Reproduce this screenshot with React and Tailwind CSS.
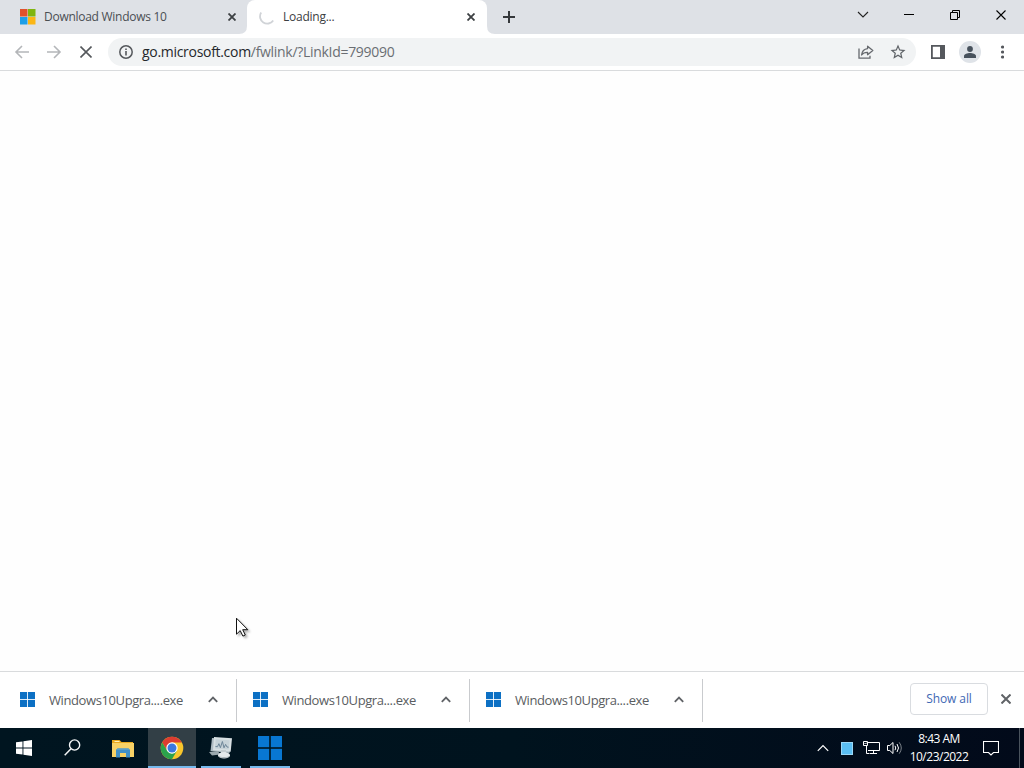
const DOWNLOADS = [
  { id: 1, name: "Windows10Upgra....exe" },
  { id: 2, name: "Windows10Upgra....exe" },
  { id: 3, name: "Windows10Upgra....exe" },
];

function MicrosoftLogo() {
  return (
    <svg width="16" height="16" viewBox="0 0 16 16" className="shrink-0">
      <path fill="#e0512b" d="M0 0h7.5v7.5H0z" />
      <path fill="#7fb50f" d="M8 0h7.5v7.5H8z" />
      <path fill="#1c9fe8" d="M0 8h7.5v7.5H0z" />
      <path fill="#fbb615" d="M8 8h7.5v7.5H8z" />
    </svg>
  );
}

function WindowsTiles({ size, gap, className }) {
  const tile = (24 - gap) / 2;
  const far = tile + gap;
  return (
    <svg width={size} height={size} viewBox="0 0 24 24" className={className}>
      <rect width={tile} height={tile} />
      <rect x={far} width={tile} height={tile} />
      <rect y={far} width={tile} height={tile} />
      <rect x={far} y={far} width={tile} height={tile} />
    </svg>
  );
}

function CloseIcon({ size = 8, stroke = 1.8, className = "" }) {
  return (
    <svg width={size} height={size} viewBox={`0 0 ${size} ${size}`} className={className}>
      <path
        d={`M.5 .5L${size - 0.5} ${size - 0.5}M${size - 0.5} .5L.5 ${size - 0.5}`}
        stroke="currentColor"
        strokeWidth={stroke}
        fill="none"
      />
    </svg>
  );
}

function TabStrip() {
  return (
    <div className="flex h-[34px] shrink-0 bg-[#dee1e6]">
      <div className="flex h-[33px] w-[239px] items-center pl-5">
        <MicrosoftLogo />
        <span className="ml-2 w-[160px] whitespace-nowrap text-[12px] tracking-[-0.27px] text-[#4a4e53]">
          Download Windows 10
        </span>
        <CloseIcon className="ml-6 text-[#3c4043]" />
      </div>

      <div className="flex">
        <svg width="8" height="34" className="shrink-0">
          <path d="M0 34Q8 34 8 26V34Z" fill="#fff" />
        </svg>
        <div className="flex h-[34px] w-[240px] items-center rounded-t-lg bg-white pb-px pl-3">
          <svg width="16" height="16" viewBox="0 0 16 16" className="shrink-0">
            <path
              d="M2.2 3.6A7 7 0 0 0 14.2 11.4"
              fill="none"
              stroke="#d0d3d7"
              strokeWidth="1.8"
            />
          </svg>
          <span className="ml-2 w-[160px] whitespace-nowrap text-[12px] tracking-[-0.25px] text-[#3c4043]">
            Loading...
          </span>
          <CloseIcon className="ml-6 text-[#3c4043]" />
        </div>
        <svg width="8" height="34" className="shrink-0">
          <path d="M0 26Q0 34 8 34H0Z" fill="#fff" />
        </svg>
      </div>

      <button type="button" className="flex h-[33px] w-7 items-center justify-center" title="New tab">
        <svg width="12" height="12" viewBox="0 0 12 12">
          <path d="M6 0v12M0 6h12" stroke="#35383b" strokeWidth="2" />
        </svg>
      </button>

      <div className="ml-auto flex h-[29px]">
        <div className="flex w-[46px] items-center justify-center">
          <svg width="12" height="8" viewBox="0 0 12 8">
            <path d="M1 1l5 5 5-5" fill="none" stroke="#222" strokeWidth="1.1" />
          </svg>
        </div>
        <div className="flex w-[46px] items-center justify-center">
          <svg width="10" height="1">
            <path d="M0 .5h10" stroke="#000" />
          </svg>
        </div>
        <div className="flex w-[46px] items-center justify-center">
          <svg width="10" height="10" viewBox="0 0 10 10">
            <path d="M.5 2.5h7v7h-7zM2.5 2V.5h7v7H8" fill="none" stroke="#000" />
          </svg>
        </div>
        <div className="flex w-[46px] items-center justify-center">
          <CloseIcon size={10} stroke={1.1} className="text-black" />
        </div>
      </div>
    </div>
  );
}

function Toolbar() {
  return (
    <div className="flex h-[37px] shrink-0 items-center border-b border-[#d9dbdd] bg-white pl-[14px]">
      <svg width="16" height="14" viewBox="0 0 16 14">
        <path d="M15 7H2M8 1L2 7l6 6" fill="none" stroke="#b4b6b9" strokeWidth="1.6" />
      </svg>
      <svg width="16" height="14" viewBox="0 0 16 14" className="ml-4">
        <path d="M1 7h13M8 1l6 6-6 6" fill="none" stroke="#b4b6b9" strokeWidth="1.6" />
      </svg>
      <CloseIcon size={12} stroke={1.6} className="ml-[18px] text-[#55585c]" />

      <div className="ml-4 flex h-7 w-[808px] items-center rounded-full bg-[#f1f3f4] pl-[11px]">
        <svg width="14" height="14" viewBox="0 0 14 14" className="shrink-0">
          <circle cx="7" cy="7" r="6.2" fill="none" stroke="#55585c" strokeWidth="1.5" />
          <path d="M7 6v4.5M7 3.4v1.5" stroke="#55585c" strokeWidth="1.6" />
        </svg>
        <span className="ml-[9px] whitespace-nowrap pb-px text-[14px] tracking-[-0.3px] text-[#6a6e73]">
          <span className="text-[#25282b]">go.microsoft.com</span>/fwlink/?LinkId=799090
        </span>
        <div className="mr-[9px] ml-auto flex items-center gap-[15px]">
          <svg width="16" height="14" viewBox="0 0 16 14">
            <path d="M1 3.5V13.2h11V10.8" fill="none" stroke="#66696e" strokeWidth="1.3" />
            <path
              d="M9.6 1.2L14.8 5.6 9.6 9.7V7.3C6.8 7.2 5 8 3.6 10 4 6.3 6.200 4 9.6 3.6Z"
              fill="none"
              stroke="#66696e"
              strokeWidth="1.3"
              strokeLinejoin="round"
            />
          </svg>
          <svg width="18" height="18" viewBox="0 0 24 24" fill="#5f6368">
            <path d="M22 9.24l-7.19-.62L12 2 9.19 8.63 2 9.24l5.46 4.73L5.82 21 12 17.27 18.18 21l-1.63-7.03L22 9.24zM12 15.4l-3.76 2.27 1-4.28-3.32-2.88 4.38-.38L12 6.1l1.71 4.04 4.38.38-3.32 2.88 1 4.28L12 15.4z" />
          </svg>
        </div>
      </div>

      <svg width="14" height="14" viewBox="0 0 14 14" className="ml-[15px]">
        <path d="M.9 .9h12.2v12.2H.9z" fill="none" stroke="#55585d" strokeWidth="1.8" />
        <path d="M9 0h5v14H9z" fill="#55585d" />
      </svg>
      <div className="ml-[14px] flex h-[22px] w-[22px] items-center justify-center rounded-full bg-[#dfe3e8]">
        <svg width="12" height="12" viewBox="0 0 12 12" fill="#47515c">
          <circle cx="6" cy="3" r="2.9" />
          <path d="M0 12v-1.8C0 8 3.5 7.1 6 7.1s6 .9 6 3.1V12z" />
        </svg>
      </div>
      <svg width="4" height="14" viewBox="0 0 4 14" className="ml-[19px]" fill="#55585d">
        <circle cx="2.5" cy="2" r="1.6" />
        <circle cx="2.5" cy="7" r="1.6" />
        <circle cx="2.5" cy="12" r="1.6" />
      </svg>
    </div>
  );
}

function DownloadItem({ name }) {
  return (
    <div className="flex h-[43px] w-[233px] items-center border-r border-[#c9cbce] pl-4">
      <WindowsTiles size={15} gap={1.4} className="mb-px shrink-0 fill-[#0c70c4]" />
      <span className="ml-[14px] w-[135px] whitespace-nowrap pt-0.5 text-[13px] tracking-[-0.4px] text-[#5a5d61]">
        {name}
      </span>
      <svg width="10" height="7" viewBox="0 0 10 7" className="mb-px ml-6">
        <path d="M.8 5.8L5 1.5l4.2 4.3" fill="none" stroke="#606367" strokeWidth="1.8" />
      </svg>
    </div>
  );
}

function DownloadShelf() {
  return (
    <div className="flex h-[57px] shrink-0 items-center border-t border-[#d9dbdd] bg-white pl-1">
      {DOWNLOADS.map((item) => (
        <DownloadItem key={item.id} name={item.name} />
      ))}
      <button
        type="button"
        className="mb-0.5 ml-auto h-8 w-[78px] rounded border border-[#d9dce0] text-[12px] font-medium tracking-[-0.1px] text-[#4168b4]"
      >
        Show all
      </button>
      <CloseIcon size={10} stroke={2} className="mr-[13px] mb-0.5 ml-[13px] text-[#606367]" />
    </div>
  );
}

function ChromeLogo() {
  return (
    <svg width="24" height="24" viewBox="0 0 24 24">
      <circle cx="12" cy="12" r="11.3" fill="#f9c62c" />
      <path d="M2.2 6.4A11.3 11.3 0 0 1 21.8 6.4H12L7.2 14.8Z" fill="#dc3d31" />
      <path d="M2.2 6.4A11.3 11.3 0 0 0 12 23.3L16.9 14.8 12 17.5 7.2 14.8Z" fill="#2ba24c" />
      <circle cx="12" cy="12" r="5.7" fill="#fff" />
      <circle cx="12" cy="12" r="4.5" fill="#3b78e0" />
    </svg>
  );
}

function ExplorerIcon() {
  return (
    <svg width="22" height="19" viewBox="0 0 22 19">
      <path d="M0 1h7.5l2 2H21v4H0z" fill="#e9a91f" />
      <path d="M2.5 2h5v1h-5z" fill="#fff2bd" />
      <path d="M0 4h22v14H0z" fill="#f8d266" />
      <path d="M4 18.500V11l1.500-1.500h11L18 11v7.500h-4V14H8v4.500z" fill="#4190c8" />
      <path d="M5.500 9.500h11L18 11H4z" fill="#5ba0cb" />
    </svg>
  );
}

function MonitorIcon() {
  return (
    <svg width="24" height="22" viewBox="0 0 24 22">
      <path d="M3 1l19 1-1.5 14L1.5 14z" fill="#aebbc2" />
      <path d="M5 0l18 1.2-1.3 13.5L4 13.2z" fill="#d8e0e3" />
      <path d="M6.7 2.2l14 1-1 9.3-13.8-1z" fill="#c6d2d8" />
      <path
        d="M6.5 9.5l2 .2 1.4-3 1.5 4 2-6.2 1.6 6.3 1.6-3.4 1.4 2.6 1.6.2"
        fill="none"
        stroke="#6c8598"
        strokeWidth="1"
      />
      <path d="M0 15l9-1 2 3.5-8 1z" fill="#9ba8ae" />
      <path d="M12 13h5v4h-5z" fill="#c5cdd1" />
      <ellipse cx="15" cy="18.2" rx="6" ry="3.2" fill="#e5e9eb" />
      <path d="M9 18.7c1 3 11 3 12 0-1.5 1.6-10 1.7-12 0z" fill="#a6b0b5" />
    </svg>
  );
}

function TaskbarApps() {
  return (
    <div className="flex h-full">
      <div className="flex w-12 items-center justify-center">
        <svg width="16" height="16" viewBox="0 0 16 16" fill="#fff">
          <path d="M0 2.3l6.5-.9v6.1H0zM7.4 1.3L16 0v7.5H7.4zM0 8.4h6.5v6.2L0 13.7zM7.4 8.4H16V16l-8.6-1.2z" />
        </svg>
      </div>
      <div className="flex w-12 items-center justify-center pb-px">
        <svg width="17" height="17" viewBox="0 0 17 17" fill="none" stroke="#f3f5f6">
          <circle cx="10.6" cy="6" r="5.1" strokeWidth="1.4" />
          <path d="M7 9.7L.7 16.2" strokeWidth="1.5" />
        </svg>
      </div>
      <div className="flex w-[52px] items-center justify-center pl-0.5">
        <ExplorerIcon />
      </div>
      <div className="flex w-12 items-center justify-center border-b-2 border-[#76b9ed] bg-[#323f46] pt-0.5">
        <ChromeLogo />
      </div>
      <div className="ml-[5px] flex w-10 items-center justify-center border-b-2 border-[#76b9ed] pt-0.5">
        <MonitorIcon />
      </div>
      <div className="ml-[9px] flex w-10 items-center justify-center border-b-2 border-[#76b9ed] pt-0.5">
        <WindowsTiles size={24} gap={1.6} className="fill-[#0877d2]" />
      </div>
    </div>
  );
}

function SystemTray() {
  return (
    <div className="ml-auto flex h-full items-center text-white">
      <svg width="12" height="8" viewBox="0 0 12 8">
        <path d="M.8 6.8L6 1.5l5.2 5.3" fill="none" stroke="#fff" strokeWidth="1.2" />
      </svg>
      <div className="ml-3 h-[13px] w-3 border border-[#9bd8f7] bg-[#5abef2]" />
      <svg width="17" height="14" viewBox="0 0 17 14" className="ml-[10px]" fill="none" stroke="#fff">
        <path d="M4.5 1.5h12v8H5M10.5 9.5v3M7 12.5h7M3.5 5v7.5h3" />
        <path d="M.5 .5h4v4h-4zM1.5 2l1 1 1.5-1.5" />
      </svg>
      <svg width="16" height="14" viewBox="0 0 16 14" className="ml-[7px]" fill="none" stroke="#fff">
        <path d="M.5 4.5h2.3L6 1.5v11L2.8 9.5H.5z" />
        <path d="M8 4.8q1.5 2.2 0 4.4M10 3q3 4 0 8" />
        <path d="M12.2 1.3q4.2 5.7 0 11.4" stroke="#7b8289" />
      </svg>
      <div className="ml-[6px] flex w-[60px] flex-col items-center whitespace-nowrap text-[12px] leading-[18px] tracking-[-0.5px]">
        <span>8:43 AM</span>
        <span>10/23/2022</span>
      </div>
      <svg width="16" height="17" viewBox="0 0 16 17" className="ml-[14px]" fill="none" stroke="#fff">
        <path d="M.5 1.5h15v11h-5L8 15l-2.500-2.500h-5z" strokeWidth="1.1" />
      </svg>
      <div className="ml-5 h-full w-px bg-[#4a535d]" />
      <div className="w-1" />
    </div>
  );
}

function Cursor() {
  return (
    <svg
      width="16"
      height="22"
      viewBox="0 0 16 22"
      className="absolute top-[617px] left-[236px] drop-shadow-[2px_2px_1px_rgba(0,0,0,0.3)]"
    >
      <path
        d="M.5 1.2v16l3.700-3.600 2.700 5.500 2.400-1.100-2.600-5.300h5.100z"
        fill="#fff"
        stroke="#111"
      />
    </svg>
  );
}

export default function App() {
  return (
    <div className="relative flex h-[768px] w-[1024px] flex-col overflow-hidden bg-white font-['Open_Sans','Noto_Sans',sans-serif]">
      <TabStrip />
      <Toolbar />
      <main className="flex-1 bg-[#fefefe]" />
      <DownloadShelf />
      <div className="flex h-10 shrink-0 bg-linear-to-r from-[#001520] via-[#00131e] to-[#020a1a]">
        <TaskbarApps />
        <SystemTray />
      </div>
      <Cursor />
    </div>
  );
}
